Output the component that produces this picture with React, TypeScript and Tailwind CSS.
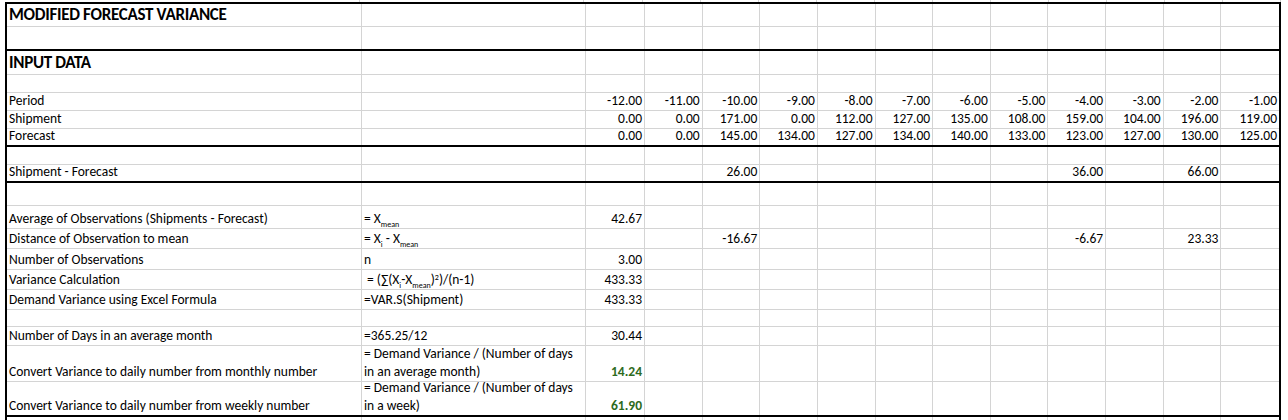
import React from "react";

type Row = { h: number; thick?: boolean; a?: React.ReactNode; b?: React.ReactNode; nums?: (string | null)[]; title?: boolean; green?: boolean };

const Sub = ({ c }: { c: string }) => <sub className="text-[8px] align-[-2px]">{c}</sub>;

const rows: Row[] = [
  { h: 23, a: "MODIFIED FORECAST VARIANCE", title: true },
  { h: 24, thick: true },
  { h: 24, a: "INPUT DATA", title: true },
  { h: 18 },
  { h: 18, a: "Period", nums: ["-12.00","-11.00","-10.00","-9.00","-8.00","-7.00","-6.00","-5.00","-4.00","-3.00","-2.00","-1.00"] },
  { h: 18, a: "Shipment", nums: ["0.00","0.00","171.00","0.00","112.00","127.00","135.00","108.00","159.00","104.00","196.00","119.00"] },
  { h: 18, a: "Forecast", thick: true, nums: ["0.00","0.00","145.00","134.00","127.00","134.00","140.00","133.00","123.00","127.00","130.00","125.00"] },
  { h: 18 },
  { h: 18, a: "Shipment - Forecast", thick: true, nums: [null, null, "26.00", null, null, null, null, null, "36.00", null, "66.00", null] },
  { h: 23 },
  { h: 23, a: "Average of Observations (Shipments - Forecast)", b: <span>= X<Sub c="mean" /></span>, nums: ["42.67"] },
  { h: 20, a: "Distance of Observation to mean", b: <span>= X<Sub c="i" /> - X<Sub c="mean" /></span>, nums: [null, null, "-16.67", null, null, null, null, null, "-6.67", null, "23.33", null] },
  { h: 21, a: "Number of Observations", b: "n", nums: ["3.00"] },
  { h: 20, a: "Variance Calculation", b: <span>&nbsp;= (∑(X<Sub c="i" />-X<Sub c="mean" />)<sup className="text-[8px]">2</sup>)/(n-1)</span>, nums: ["433.33"] },
  { h: 20, a: "Demand Variance using Excel Formula", b: "=VAR.S(Shipment)", nums: ["433.33"] },
  { h: 17 },
  { h: 19, a: "Number of Days in an average month", b: "=365.25/12", nums: ["30.44"] },
  { h: 36, a: "Convert Variance to daily number from monthly number", b: <span>= Demand Variance / (Number of days<br />in an average month)</span>, nums: ["14.24"], green: true },
  { h: 35, thick: true, a: "Convert Variance to daily number from weekly number", b: <span>= Demand Variance / (Number of days<br />in a week)</span>, nums: ["61.90"], green: true },
  { h: 10 },
];

const cols = "grid-cols-[355px_224px_59px_repeat(11,minmax(0,1fr))]";

export default function App() {
  return (
    <div className="w-[1288px] h-[420px] overflow-hidden bg-white pl-[5px]" style={{ fontFamily: "Carlito, 'Open Sans', 'Liberation Sans', sans-serif" }}>
      <div className="w-[1276px] h-[4px] border-b-2 border-black grid grid-cols-[355px_224px_59px_repeat(11,minmax(0,1fr))]">
        {Array.from({ length: 14 }).map((_, i) => (
          <div key={i} className="border-r border-[#d4d4d4]" />
        ))}
      </div>
      <div className="w-[1276px] border-l-2 border-r-2 border-black">
        {rows.map((r, ri) => (
          <div
            key={ri}
            className={`grid ${cols} text-[13.5px] text-black ${r.thick ? "border-b-2 border-black" : "border-b border-[#d4d4d4]"}`}
            style={{ height: r.h }}
          >
            <div className="border-r border-[#d4d4d4] flex items-end px-[2px] pb-[0px] leading-[18px] whitespace-nowrap overflow-hidden">
              {r.title ? <span className="font-bold text-[17px] leading-[22px] tracking-[-0.3px]">{r.a}</span> : r.a}
            </div>
            <div className="border-r border-[#d4d4d4] flex items-end px-[2px] pb-[0px] leading-[18px] whitespace-nowrap overflow-hidden">{r.b}</div>
            {Array.from({ length: 12 }).map((_, ci) => {
              const v = r.nums ? r.nums[ci] : null;
              return (
                <div
                  key={ci}
                  className={`${ci < 11 ? "border-r border-[#d4d4d4]" : ""} flex items-end justify-end px-[2px] pb-[0px] leading-[18px] whitespace-nowrap overflow-hidden ${r.green ? "text-[#2e6b1e] font-bold" : ""}`}
                >
                  {v}
                </div>
              );
            })}
          </div>
        ))}
      </div>
    </div>
  );
}
